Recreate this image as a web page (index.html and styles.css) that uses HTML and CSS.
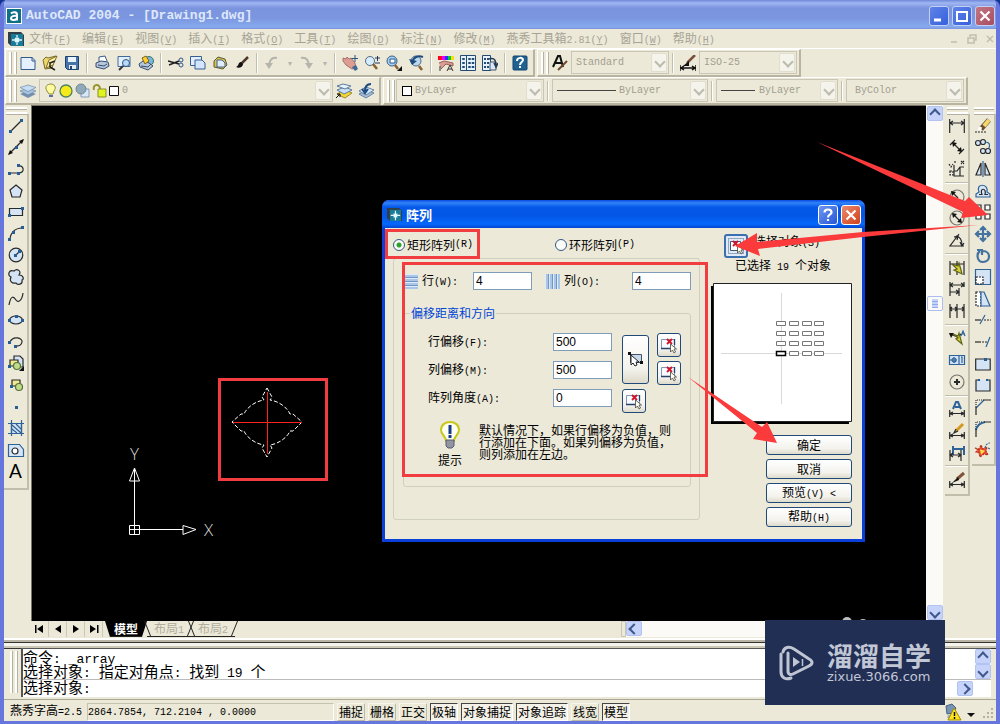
FILE: index.html
```html
<!DOCTYPE html>
<html lang="zh-CN">
<head>
<meta charset="utf-8">
<title>AutoCAD 2004 - [Drawing1.dwg]</title>
<link rel="stylesheet" href="styles.css">
</head>
<body>
<div class="window">
<header class="titlebar">
  <svg class="app-logo" viewBox="0 0 16 16"><rect width="16" height="16" fill="#fff"/><rect x="1" y="1" width="14" height="14" fill="#0f6f86"/><path d="M5 5.500c2-2 6-1.500 6 1v6M11 8c-3-.5-6 0-6 2.300s4 2.500 6 0" fill="none" stroke="#fff" stroke-width="2"/></svg>
  <h1>AutoCAD 2004 - [Drawing1.dwg]</h1>
  <div class="win-buttons">
    <button class="wb" aria-label="最小化"><svg viewBox="0 0 18 18"><path d="M4 13h7" stroke="#fff" stroke-width="3"/></svg></button>
    <button class="wb" aria-label="最大化"><svg viewBox="0 0 18 18"><path d="M4 5h10M4 4v10h10V4" fill="none" stroke="#fff" stroke-width="2"/></svg></button>
    <button class="wb wb-close" aria-label="关闭"><svg viewBox="0 0 18 18"><path d="M4.500 4.500l9 9m0-9l-9 9" stroke="#fff" stroke-width="2.200"/></svg></button>
  </div>
</header>
<nav class="menubar">
  <svg class="doc-logo" viewBox="0 0 16 16"><path d="M0 1h13l3 3v11H3l-3-3z" fill="#333d46"/><rect x="3" y="3" width="12" height="12" fill="#197b98"/><path d="M9 4v10M4 9h10M7 7l4 4m0-4l-4 4" stroke="#e2fbff" stroke-width="1.300"/></svg>
  <a href="#">文件<span class="k">(<u>F</u>)</span></a>
  <a href="#">编辑<span class="k">(<u>E</u>)</span></a>
  <a href="#">视图<span class="k">(<u>V</u>)</span></a>
  <a href="#">插入<span class="k">(<u>I</u>)</span></a>
  <a href="#">格式<span class="k">(<u>O</u>)</span></a>
  <a href="#">工具<span class="k">(<u>T</u>)</span></a>
  <a href="#">绘图<span class="k">(<u>D</u>)</span></a>
  <a href="#">标注<span class="k">(<u>N</u>)</span></a>
  <a href="#">修改<span class="k">(<u>M</u>)</span></a>
  <a href="#">燕秀工具箱<span class="k">2.81(<u>Y</u>)</span></a>
  <a href="#">窗口<span class="k">(<u>W</u>)</span></a>
  <a href="#">帮助<span class="k">(<u>H</u>)</span></a>
  <svg class="mdi" viewBox="0 0 46 12"><path d="M1 9h6M18 5h6v5h-6zM20 4V2h6v5h-2M37 3l6 6m0-6l-6 6" fill="none" stroke="#c2beaf" stroke-width="1.500"/></svg>
</nav>

<div class="bar-row">
  <div class="bar">
    <i class="grip"></i>
    <button class="tb" aria-label="新建"><svg viewBox="0 0 16 16"><path d="M1 2.500h11l3 3v9H1z" fill="#e4f0ff" stroke="#315a8a"/><path d="M12 2v4h3" stroke="#315a8a"/></svg></button>
    <button class="tb" aria-label="打开"><svg viewBox="0 0 16 16"><path d="M1 5l3-3 2 1 8-2-4 12-7 1z" fill="#ecd76c" stroke="#7c6b27"/><path d="M4 13L7 5l8-4-4 9z" fill="#fff3ae" stroke="#7c6b27"/><path d="M8 7v5l5 3M8 8l5-2" stroke="#222" stroke-width="1.500"/></svg></button>
    <button class="tb" aria-label="保存"><svg viewBox="0 0 16 16"><path d="M1.500 1.500h13v13h-11l-2-2z" fill="#4674aa" stroke="#1d426e"/><path d="M4 2h8v5H4z" fill="#e8f4ff"/><path d="M5 10h7v4H5z" fill="#e7eaf0"/><path d="M7 11v3" stroke="#23466f" stroke-width="2"/></svg></button>
    <i class="sep"></i>
    <button class="tb" aria-label="打印"><svg viewBox="0 0 16 16"><path d="M5 7V2l6-1 2 5" fill="#fff" stroke="#385d86"/><path d="M2 8l5-2 7 1 1 4-5 3-8-2z" fill="#b6c7dc" stroke="#344d72"/><path d="M4 10l6 1 3-2" stroke="#344d72"/></svg></button>
    <button class="tb" aria-label="打印预览"><svg viewBox="0 0 16 16"><path d="M2 1.500h12v10H2z" fill="#e1efff" stroke="#406b9b"/><circle cx="10" cy="8" r="3.500" fill="#b8d9f7" stroke="#30557d"/><path d="M7 11l-4 4" stroke="#334" stroke-width="2"/></svg></button>
    <button class="tb" aria-label="发布"><svg viewBox="0 0 16 16"><circle cx="11" cy="6" r="4.500" fill="#7bb5dd" stroke="#376"/><path d="M1 9l4-3 6 2 4 3-5 4-8-3z" fill="#b6c7dc" stroke="#394e6d"/><path d="M4 3l4-2 3 5-4 3z" fill="#ffcf2e" stroke="#7c5e22"/><path d="M3 11l7 1 3-3" stroke="#394e6d"/></svg></button>
    <i class="sep"></i>
    <button class="tb" aria-label="剪切"><svg viewBox="0 0 16 16"><path d="M0 6l11 3M1 10l10-4" stroke="#222" stroke-width="1.500"/><circle cx="13" cy="5" r="2" stroke="#315486"/><circle cx="13" cy="10" r="2" stroke="#315486"/></svg></button>
    <button class="tb" aria-label="复制"><svg viewBox="0 0 16 16"><path d="M.5 1.500h11v9H.5z" fill="#e2edff" stroke="#375f8d"/><path d="M5 5h7l3 3v6H5z" fill="#d2e7ff" stroke="#375f8d"/></svg></button>
    <button class="tb" aria-label="粘贴"><svg viewBox="0 0 16 16"><path d="M2 6l4-4 7 2 2 6-4 4-9-2z" fill="#d9c24e" stroke="#5c5936"/><path d="M5 5h5l3 3v4H5z" fill="#dfedff" stroke="#416189"/></svg></button>
    <button class="tb" aria-label="特性匹配"><svg viewBox="0 0 16 16"><path d="M14 2L7 9" stroke="#4c3b2c" stroke-width="2.500"/><path d="M7 7c-3 0-2 4-5 5 3 2 7 0 7-3z" fill="#111"/></svg></button>
    <i class="sep"></i>
    <button class="tb" aria-label="放弃"><svg viewBox="0 0 16 16"><path d="M13 3C7 2 5 6 5 12" stroke="#b5b4ad" stroke-width="2"/><path d="M1 8l4 6 4-6z" fill="#b5b4ad"/></svg></button>
    <i class="mini">▾</i>
    <button class="tb" aria-label="重做"><svg viewBox="0 0 16 16"><path d="M2 3c6-1 8 3 8 9" stroke="#b5b4ad" stroke-width="2"/><path d="M6 8l4 6 4-6z" fill="#b5b4ad"/></svg></button>
    <i class="mini">▾</i>
    <i class="sep"></i>
    <button class="tb" aria-label="平移"><svg viewBox="0 0 16 16"><path d="M1 3l3 1 1-2 2 2 2-1 4 5 1 5-4 1-6-4-3-4z" fill="#dc9d93" stroke="#a97069"/><path d="M10 12l4-2 2 4-3 2z" fill="#416994"/><path d="M13 0v7M9.500 3.500h6.500" stroke="#29557c"/></svg></button>
    <button class="tb" aria-label="实时缩放"><svg viewBox="0 0 16 16"><circle cx="6" cy="6" r="4.500" fill="#d6ecff" stroke="#546b82"/><path d="M9 9l4 5" stroke="#8a602f" stroke-width="2.500"/><path d="M11 3h5M13.500 1v5M11 8h5" stroke="#203b63"/></svg></button>
    <button class="tb" aria-label="窗口缩放"><svg viewBox="0 0 16 16"><circle cx="6" cy="6" r="5" fill="#a9d4fa" stroke="#425c78"/><path d="M4 4h5v4H4z" fill="#fff" stroke="#235992"/><path d="M9 10l3 4" stroke="#8a602f" stroke-width="2.500"/><path d="M16 11v5h-5z" fill="#111"/></svg></button>
    <button class="tb" aria-label="缩放上一个"><svg viewBox="0 0 16 16"><circle cx="8" cy="6" r="5" fill="#bad8ef" stroke="#4f6c89"/><path d="M11 11l3 4" stroke="#8a602f" stroke-width="2.500"/><path d="M15 2C9 0 5 3 4 7" stroke="#1f4c7c" stroke-width="2"/><path d="M1 4l3 6 5-4z" fill="#1f4c7c"/></svg></button>
    <i class="sep"></i>
    <button class="tb" aria-label="特性"><svg viewBox="0 0 16 16"><path d="M0 1h4v4H0z" fill="#f02"/><path d="M4 1h3v4H4z" fill="#e0f"/><path d="M7 1h3v4H7z" fill="#23f"/><path d="M10 1h3v4h-3z" fill="#0c4"/><path d="M13 1h3v4h-3z" fill="#fd0"/><path d="M1 8l5-2 9 2v3L8 9l-5 5" fill="#d89d94" stroke="#9b5d56"/><path d="M9 16l3-6 3 6M10 14h4M2 11v5" stroke="#333"/></svg></button>
    <button class="tb" aria-label="设计中心"><svg viewBox="0 0 16 16"><path d="M.5.500h15v15H.5z" fill="#e6f3ff" stroke="#244c73"/><path d="M6.500 1v15" stroke="#244c73"/><path d="M3.500 3v11M9.500 3v11M13 3v11" stroke="#244c73" stroke-width="2.500" stroke-dasharray="2 2"/></svg></button>
    <button class="tb" aria-label="工具选项板"><svg viewBox="0 0 16 16"><path d="M.5.500h8v15h-8z" fill="#e6f3ff" stroke="#244c73"/><path d="M3 3v11M6 3v11" stroke="#244c73" stroke-width="2" stroke-dasharray="2 2"/><path d="M8 7h6v8H8z" fill="#d9e8f9" stroke="#456"/><path d="M7 4c6-2 7 2 7 7m-2-3 2 4 2-4" stroke="#253a52" stroke-width="1.500"/></svg></button>
    <i class="sep"></i>
    <button class="tb" aria-label="帮助"><svg viewBox="0 0 16 16"><rect x="1" y="1" width="14" height="14" rx="1" fill="#206291" stroke="#10476f"/><path d="M5 6c0-4 6-4 6-1 0 2-3 2-3 5M8 11v2" stroke="#fff" stroke-width="2"/></svg></button>
  </div>
  <div class="bar">
    <i class="grip"></i>
    <span class="tb"><svg viewBox="0 0 16 16"><path d="M1 12L6 1h2l3 11M3 8h7" stroke="#111" stroke-width="2"/><path d="M15 6l-6 6-3 3" stroke="#70482f" stroke-width="2"/></svg></span>
    <label class="combo w-style"><select disabled aria-label="文字样式"><option>Standard</option></select><i class="chev"></i></label>
    <i class="sep"></i>
    <span class="tb"><svg viewBox="0 0 16 16"><path d="M0 10v6M16 10v6M1 13h14M4 11l-3 2 3 2M12 11l3 2-3 2" stroke="#111" stroke-width="1.500"/><path d="M15 0L7 8" stroke="#785039" stroke-width="2.500"/><path d="M9 6L3 11h6z" fill="#111"/></svg></span>
    <label class="combo w-style"><select disabled aria-label="标注样式"><option>ISO-25</option></select><i class="chev"></i></label>
  </div>
</div>

<div class="bar-row">
  <div class="bar">
    <i class="grip"></i>
    <button class="tb" aria-label="图层特性管理器"><svg viewBox="0 0 16 16"><path d="M0 11l8-3 8 3-8 4z" fill="#7890ad"/><path d="M0 8l8-3 8 3-8 4z" fill="#a9c4df" stroke="#597c9f" stroke-width=".6"/><path d="M0 4.500L8 2l8 2.500-8 4z" fill="#c7def2" stroke="#597c9f" stroke-width=".6"/></svg></button>
    <label class="combo w-layer"><select disabled aria-label="图层"><option>0</option></select>
      <svg class="layer-icons" viewBox="0 0 76 16"><path d="M3 8C0 3 4 1 7 1s6 3 3 7l-1 3H5z" fill="#fffb9e" stroke="#8c8b41"/><path d="M5 12h4v2H5z" fill="#626da0"/><circle cx="22" cy="8" r="6" fill="#f6ea1b" stroke="#4b8360" stroke-width="1.300"/><path d="M37 6h8v8h-8z" fill="#d6e8fa" stroke="#889bb4"/><circle cx="37" cy="6" r="5" fill="#8fa9b9" stroke="#748894"/><path d="M50 7c-2-6 6-7 6-1v4" fill="none" stroke="#9a9428" stroke-width="2"/><path d="M54 6h8v8h-8z" fill="#dff51e" stroke="#8c8b31"/><path d="M65.500 3.500h9v9h-9z" fill="#fff" stroke="#111"/></svg>
      <i class="chev"></i></label>
    <button class="tb" aria-label="图层置为当前"><svg viewBox="0 0 16 16"><path d="M1 11l8-4 7 3-7 5z" fill="#f2d737" stroke="#9d8728"/><path d="M1 7l8-3 7 3-8 4z" fill="#c9dff6" stroke="#5e7b9d"/><path d="M1 3l6-2 8 2-6 3z" fill="#e3f2ff" stroke="#5e7b9d"/><path d="M0 15l4-4M1 11h3v3" stroke="#111"/></svg></button>
    <button class="tb" aria-label="上一个图层"><svg viewBox="0 0 16 16"><path d="M1 11l8-4 7 3-8 5z" fill="#a8bed6" stroke="#6683a5"/><path d="M1 8l7-4 8 3-8 5z" fill="#d6e8fb" stroke="#6683a5"/><path d="M13 1C8 1 7 4 7 8M4 6l3 4 3-4" stroke="#1b4980" stroke-width="2"/></svg></button>
  </div>
  <div class="bar">
    <i class="grip"></i>
    <label class="combo w-color"><select disabled aria-label="颜色"><option>ByLayer</option></select><i class="swatch"></i><i class="chev"></i></label>
    <i class="sep"></i>
    <label class="combo w-type"><select disabled aria-label="线型"><option>ByLayer</option></select><i class="stroke-line"></i><i class="chev"></i></label>
    <i class="sep"></i>
    <label class="combo w-weight"><select disabled aria-label="线宽"><option>ByLayer</option></select><i class="stroke-line"></i><i class="chev"></i></label>
    <i class="sep"></i>
    <label class="combo w-plot"><select disabled aria-label="打印样式"><option>ByColor</option></select><i class="chev"></i></label>
  </div>
</div>

<main class="work">
  <div class="side side-draw">
    <i class="hgrip"></i>
    <div class="stack draw-stack">
      <button aria-label="直线"><svg viewBox="0 0 16 16"><path d="M2 14L14 2"/><path class="d" d="M1 12h3v3H1zM12 1h3v3h-3z"/></svg></button>
      <button aria-label="构造线"><svg viewBox="0 0 16 16"><path d="M1 15L15 1"/><path class="b" d="M0 16l2-5 3 3zM16 0l-2 5-3-3z"/><path class="d" d="M7 7h3v3H7z"/></svg></button>
      <button aria-label="多段线"><svg viewBox="0 0 16 16"><path d="M1 12h10c6 0 5-8 0-7"/><path class="d" d="M0 11h3v3H0zM9 11h3v3H9zM9 3h3v3H9z"/></svg></button>
      <button aria-label="正多边形"><svg viewBox="0 0 16 16"><path class="f" d="M8 2l6 5-2 7H4L2 7z"/></svg></button>
      <button aria-label="矩形"><svg viewBox="0 0 16 16"><path class="f" d="M1.500 4.500h13v7h-13z"/><path class="d" d="M0 10h3v3H0zM13 3h3v3h-3z"/></svg></button>
      <button aria-label="圆弧"><svg viewBox="0 0 16 16"><path d="M2 14C2 7 7 2 14 2"/><path class="d" d="M0 12h3v3H0zM4 5h3v3H4zM13 0h3v3h-3z"/></svg></button>
      <button aria-label="圆"><svg viewBox="0 0 16 16"><circle class="f" cx="8" cy="8" r="6.800"/><path d="M7 9l4-4"/><path class="d" d="M6 7h3v3H6zM10 3h3v3h-3z"/></svg></button>
      <button aria-label="修订云线"><svg viewBox="0 0 16 16"><path class="f" d="M3 8C-1 6 1 0 6 2c3-3 8 0 5 4 5 0 5 5 3 5 1 5-5 5-6 3-4 1-7-2-5-6z"/></svg></button>
      <button aria-label="样条曲线"><svg viewBox="0 0 16 16"><path d="M1 14C3 3 6 6 8 9s6 1 7-7"/></svg></button>
      <button aria-label="椭圆"><svg viewBox="0 0 16 16"><ellipse class="f" cx="8" cy="8" rx="6.500" ry="4"/><path class="d" d="M0 7h3v3H0zM13 7h3v3h-3zM7 3h3v3H7z"/></svg></button>
      <button aria-label="椭圆弧"><svg viewBox="0 0 16 16"><path d="M2 8c3-7 13-4 12 0-1 5-5 4-7 4"/><path class="d" d="M0 7h3v3H0zM6 11h3v3H6z"/></svg></button>
      <button aria-label="插入块"><svg viewBox="0 0 16 16"><path class="f" d="M6 1h6l3 3v8H6z"/><path class="y" d="M2 5h8v6H2z"/><circle class="g" cx="9" cy="11" r="3.500"/><path class="d" d="M0 10h3v3H0z"/><path class="b" d="M16 11v5h-5z"/></svg></button>
      <button aria-label="创建块"><svg viewBox="0 0 16 16"><path class="y" d="M4 3h8v6H4z"/><circle class="g" cx="11" cy="10" r="3.500"/><path class="d" d="M2 8h3v3H2z"/></svg></button>
      <button aria-label="点"><svg viewBox="0 0 16 16"><path class="d" d="M7 7h3v3H7z"/></svg></button>
      <button aria-label="图案填充"><svg viewBox="0 0 16 16"><path class="f" d="M3.500 3.500h10v10h-10z"/><path class="blue" d="M0 3.500h16M0 13.500h16M3.500 0v16M13.500 0v16M4 5l9 8M4 9l5 4M8 4l5 5"/></svg></button>
      <button aria-label="面域"><svg viewBox="0 0 16 16"><path class="f blue" d="M.5 2.500h11l4 5v7H.5z"/><circle class="w" cx="7" cy="9" r="3"/></svg></button>
      <button class="text-tool" aria-label="多行文字">A</button>
    </div>
  </div>

  <div class="center">
    <div class="view">
      <svg class="drawing" viewBox="1 1 400 515">
        <g fill="none" stroke="#fff">
          <path d="M103.500 420V364M99 424.500h53M98.500 420.500h10v9h-10zM103.500 419v11M103.500 363l-5 13h10zM165 424.500l-13-4v9z"/>
          <path stroke-dasharray="4 2" d="M236 283l5 9-2 3c8 1 17 7 20 14h3l9 8-9 9h-3c-3 7-12 13-20 14l2 3-5 9-5-9 2-3c-8-1-17-7-20-14h-3l-9-9 9-8h3c3-7 12-13 20-14l-2-3z"/>
        </g>
        <path d="M202 317.500h69M236.500 287v62" fill="none" stroke="#ff2020"/>
        <g class="axis"><text x="99" y="355">Y</text><text x="173" y="431">X</text></g>
      </svg>
    </div>
    <div class="tabs">
      <button class="nav" aria-label="第一个"><svg viewBox="0 0 18 16"><path d="M4 4h1.500v8H4zM12 4v8L6 8z"/></svg></button>
      <button class="nav" aria-label="上一个"><svg viewBox="0 0 18 16"><path d="M12 4v8L6 8z"/></svg></button>
      <button class="nav" aria-label="下一个"><svg viewBox="0 0 18 16"><path d="M6 4v8l6-4z"/></svg></button>
      <button class="nav" aria-label="最后一个"><svg viewBox="0 0 18 16"><path d="M5 4v8l6-4zM12 4h1.500v8H12z"/></svg></button>
      <button class="tab tab-on">模型</button>
      <button class="tab">布局<span class="k">1</span></button>
      <button class="tab">布局<span class="k">2</span></button>
      <div class="hscroll"><i class="split"></i><button class="sb left" aria-label="向左"></button></div>
    </div>
  </div>

  <div class="vscroll">
    <button class="sb up" aria-label="向上"></button>
    <i class="thumb"></i>
    <button class="sb down" aria-label="向下"></button>
  </div>

  <div class="side">
    <i class="hgrip"></i>
    <div class="stack dim-stack">
      <button aria-label="线性标注"><svg viewBox="0 0 16 16"><path d="M.7 1v14M15.300 1v14M1 5h14M4 3L1 5l3 2M12 3l3 2-3 2"/></svg></button>
      <button aria-label="对齐标注"><svg viewBox="0 0 16 16"><path d="M1 6l5-5M10 15l5-5M4 4l9 9"/><path class="b" d="M3 3l5 1-4 4zM13 13l-5-1 4-4z"/></svg></button>
      <button aria-label="坐标标注"><svg viewBox="0 0 16 16"><path d="M5 4v11h10M5 10h3l3-4h4M11 6v9" /><path stroke-dasharray="2 1" d="M0 3l2 3 2-3M1 10h3v4H1zM6 0v3M12 0l3 3m0-3-3 3"/></svg></button>
      <i class="hsep"></i>
      <button aria-label="半径标注"><svg viewBox="0 0 16 16"><circle class="gray" cx="8" cy="8" r="7"/><path d="M9 9L4 4"/><path class="b" d="M2 2l5 1-4 4z"/></svg></button>
      <button aria-label="直径标注"><svg viewBox="0 0 16 16"><circle class="gray" cx="8" cy="8" r="7"/><path d="M4 4l8 8"/><path class="b" d="M3 3l5 1-4 4zM13 13l-5-1 4-4z"/></svg></button>
      <button aria-label="角度标注"><svg viewBox="0 0 16 16"><path d="M15 14H1L10 2M7 4c5 1 6 5 6 9M5 5l4-1-1 4M11 10l2 4 2-3"/></svg></button>
      <i class="hsep"></i>
      <button aria-label="快速标注"><svg viewBox="0 0 16 16"><path d="M1 1v14M15 1v14M1 4h14M8 1v14"/><path class="bolt" d="M3 4l6 2 1-3 2 7 1 4-8-4 3-1z"/></svg></button>
      <button aria-label="基线标注"><svg viewBox="0 0 16 16"><path d="M1 1v14M10 7v8M15 1v5M1 4h14M1 11h9M4 2L1 4l3 2M12 2l3 2-3 2M7 9l3 2-3 2"/></svg></button>
      <button aria-label="连续标注"><svg viewBox="0 0 16 16"><path d="M1 1v14M8 1v14M15 1v14M1 6h14M3 4L1 6l2 2M6 4l2 2-2 2M13 4l2 2-2 2"/></svg></button>
      <i class="hsep"></i>
      <button aria-label="快速引线"><svg viewBox="0 0 16 16"><path d="M1 4l8 3 3-3"/><path class="b" d="M0 3h5l-3 5z"/><path class="bolt" d="M4 4l5 2 1-3 3 11-6-5 2-1z"/><path class="blue" d="M12 6l2-5 2 5M13 4h3"/></svg></button>
      <button aria-label="公差"><svg viewBox="0 0 16 16"><path class="f blue" d="M.5 3.500h15v9H.5z"/><path class="blue" d="M10 4v8M1 8h7M5 5v6M12 5h1v6"/><circle class="blue" cx="5" cy="8" r="2"/></svg></button>
      <button aria-label="圆心标记"><svg viewBox="0 0 16 16"><circle class="gray" cx="8" cy="8" r="7"/><path d="M8 5v6M5 8h6" stroke-width="2"/></svg></button>
      <i class="hsep"></i>
      <button aria-label="编辑标注"><svg viewBox="0 0 16 16"><path class="blue" d="M4 8l3-7h2l3 7M6 6h5" stroke-width="2"/><path d="M.7 9v7M15.300 9v7M1 12.500h14M4 11l-3 1.500L4 14M12 11l3 1.500-3 1.500"/></svg></button>
      <button aria-label="编辑标注文字"><svg viewBox="0 0 16 16"><path style="stroke:#d59821;stroke-width:3" d="M14 1L7 8"/><path d="M7 6l-2 4 4-2M.7 9v7M15.300 9v7M1 12.500h14M4 11l-3 1.500L4 14M12 11l3 1.500-3 1.500"/></svg></button>
      <button aria-label="标注更新"><svg viewBox="0 0 16 16"><path class="blue" d="M4 1v9M15 1v9M4 4h11" stroke-width="2"/><path d="M1 5v11M12 5v11M1 10h11M4 8l-3 2 3 2M9 8l3 2-3 2"/></svg></button>
      <i class="hsep"></i>
      <button aria-label="标注样式管理"><svg viewBox="0 0 16 16"><path d="M.7 9v7M15.300 9v7M1 12.500h14M4 11l-3 1.500L4 14M12 11l3 1.500-3 1.500"/><path d="M15 1L8 7" stroke="#81533d" stroke-width="3"/><path class="b" d="M9 5l-6 6 7-3z"/></svg></button>
    </div>
  </div>
  <div class="side side-modify">
    <i class="hgrip"></i>
    <div class="stack modify-stack">
      <button aria-label="删除"><svg viewBox="0 0 16 16"><path d="M0 14h12" stroke-dasharray="2 1"/><path d="M14 2L6 11" stroke="#6b4c2f" stroke-width="5"/><path d="M14 2L9 8" stroke="#f3d96b" stroke-width="4"/><path d="M6 9l-2 3" stroke="#fff" stroke-width="3"/></svg></button>
      <button aria-label="复制对象"><svg viewBox="0 0 16 16"><circle class="f" cx="3" cy="4" r="2.500"/><circle class="f" cx="8" cy="3" r="2.500"/><circle class="f" cx="8" cy="12" r="2.500"/><circle class="f" cx="13" cy="12" r="2.500"/><path class="blue" d="M10 3c5 0 5 3 4 6"/></svg></button>
      <button aria-label="镜像"><svg viewBox="0 0 16 16"><path class="f" d="M6 2v12H1z"/><path class="f" d="M10 2v12h5z"/><path class="blue" d="M8 0v16"/></svg></button>
      <button aria-label="偏移"><svg viewBox="0 0 16 16"><path class="f blue" d="M1 14v-3l3-2c-4-9 10-9 8 0l3 2v3z"/><path d="M4 11.500h3c-3-7 5-7 3 0h3"/></svg></button>
      <button aria-label="阵列"><svg viewBox="0 0 16 16"><path class="w" d="M1 1h5v5H1zM10 1h5v5h-5zM1 10h5v5H1zM10 10h5v5h-5z"/></svg></button>
      <button aria-label="移动"><svg viewBox="0 0 16 16"><path class="mid" d="M8 1v14M1 8h14M5 4l3-3 3 3M5 12l3 3 3-3M4 5L1 8l3 3M12 5l3 3-3 3"/></svg></button>
      <button aria-label="旋转"><svg viewBox="0 0 16 16"><path class="mid" d="M5 3C1 6 2 14 8 14c8 0 8-11 0-11M2 2h5v5"/></svg></button>
      <button aria-label="缩放"><svg viewBox="0 0 16 16"><path class="f blue" d="M.5.500h15v15H.5z"/><path class="w" stroke-dasharray="2 1" d="M1 8h7v7H1z"/></svg></button>
      <button aria-label="拉伸"><svg viewBox="0 0 16 16"><path class="w" d="M1 1h5v14H1z" stroke-dasharray="2 1"/><path class="f blue" d="M6 1h3l6 14H6z"/></svg></button>
      <button aria-label="修剪"><svg viewBox="0 0 16 16"><path d="M0 8h6"/><path stroke-dasharray="2 1" d="M9 8h7"/><path class="blue" d="M10 3L5 12"/></svg></button>
      <button aria-label="延伸"><svg viewBox="0 0 16 16"><path d="M0 8h6"/><path stroke-dasharray="2 1" d="M7 8h5"/><path class="blue" d="M15 3l-4 10"/></svg></button>
      <button aria-label="打断于点"><svg viewBox="0 0 16 16"><path class="f" d="M.7 3h14.500v11H.7z"/><path class="d" d="M9 2h3v3H9z"/></svg></button>
      <button aria-label="打断"><svg viewBox="0 0 16 16"><path class="f" stroke="none" d="M1 3h14v11H1z"/><path d="M4 3H1v11h14V3h-3"/><path class="d" d="M3 2h2v2H3zM11 2h2v2h-2z"/></svg></button>
      <button aria-label="倒角"><svg viewBox="0 0 16 16"><path stroke-dasharray="1 1" d="M1 8V1h7"/><path class="blue" d="M1 9l8-8"/><path d="M8 1h8M1 8v8"/></svg></button>
      <button aria-label="圆角"><svg viewBox="0 0 16 16"><path stroke-dasharray="1 1" d="M1 8V1h7"/><path class="blue" d="M1 9c1-5 4-7 9-8" stroke-width="2"/><path d="M9 1h7M1 8v8"/></svg></button>
      <button aria-label="分解"><svg viewBox="0 0 16 16"><path d="M0 6l4 1 2-4 2 4 4-2-1 4 2 4-4-1-4 3-1-4-3-1 2-2z" fill="#e6482c" stroke="#b83420" stroke-dasharray="2 1"/><path d="M5 8l4 1-3 3" fill="#ffd94c" stroke="#ffd94c"/><path d="M10 6c1-4 3-5 5-5M13 6l2 1" stroke="#456799" stroke-dasharray="2 1"/></svg></button>
    </div>
  </div>
</main>

<section class="command">
  <i class="grip cgrip"></i>
  <div class="console">
    <div class="history">
      <div class="log"><p>命令<span class="m">: _array</span></p><p>选择对象<span class="m">: </span>指定对角点<span class="m">: </span>找到<span class="m"> 19 </span>个</p></div>
      <div class="log-scroll"><button class="sb up" aria-label="上一行"></button><button class="sb down" aria-label="下一行"></button></div>
    </div>
    <div class="prompt"><label for="cmd">选择对象<span class="m">:</span></label><input id="cmd" type="text"><button class="sb right" aria-label="向右"></button></div>
  </div>
</section>

<footer class="status">
  <span class="height">燕秀字高<span class="k">=2.5</span></span>
  <output class="coords k">2864.7854, 712.2104 , 0.0000</output>
  <button>捕捉</button><button>栅格</button><button>正交</button><button class="on">极轴</button><button class="on">对象捕捉</button><button class="on">对象追踪</button><button>线宽</button><button class="on">模型</button>
  <svg class="tray" viewBox="0 0 52 18"><path d="M2 3l6-2 4 4-3 5-6 1z" fill="#7894b4" stroke="#49617f"/><path d="M4 12h6v3H3z" fill="#9cb2cb"/><path d="M10 5l7 12H4z" fill="#ffe51f" stroke="#9b8900"/><path d="M10.500 9v4M10.500 14v2" stroke="#111" stroke-width="1.500"/><path d="M23 10h8l-4 4z" fill="#111"/><path d="M48 5v12M44 9v8M40 13v4" stroke="#b5b09b" stroke-width="2" stroke-dasharray="2 2"/></svg>
</footer>

<section class="dialog" role="dialog" aria-labelledby="dlg-name">
  <header class="dlg-title">
    <svg viewBox="0 0 16 16"><path d="M0 1h13l3 3v11H3l-3-3z" fill="#333d46"/><rect x="3" y="3" width="12" height="12" fill="#197b98"/><path d="M9 4v10M4 9h10M7 7l4 4m0-4l-4 4" stroke="#e2fbff" stroke-width="1.300"/></svg>
    <h2 id="dlg-name">阵列</h2>
    <button class="db" aria-label="帮助"><svg viewBox="0 0 18 18"><path d="M5.500 6.500c0-4 7-4 7 0 0 2-3.500 2-3.500 5M9 13v2" fill="none" stroke="#fff" stroke-width="2.200"/></svg></button>
    <button class="db db-close" aria-label="关闭"><svg viewBox="0 0 18 18"><path d="M4.500 4.500l9 9m0-9l-9 9" stroke="#fff" stroke-width="2.200"/></svg></button>
  </header>
  <div class="dlg-body">
    <div class="dlg-left">
      <div class="kinds">
        <label><input type="radio" name="kind" checked>矩形阵列<span class="k">(R)</span></label>
        <label><input type="radio" name="kind">环形阵列<span class="k">(P)</span></label>
      </div>
      <div class="panel">
        <div class="counts">
          <i class="rows-ic"></i><label for="rows">行<span class="k">(W):</span></label><input id="rows" type="text" value="4">
          <i class="cols-ic"></i><label for="cols">列<span class="k">(O):</span></label><input id="cols" type="text" value="4">
        </div>
        <fieldset>
          <legend>偏移距离和方向</legend>
          <div class="offsets">
            <label for="ro">行偏移<span class="k">(F):</span></label><input id="ro" type="text" value="500">
            <button class="xp tall" aria-label="拾取两个偏移"><svg viewBox="0 0 18 18"><path d="M3.500 4.500h11v8h-11z" fill="#c9d9ea" stroke="#40546c"/><path d="M1 2h3v3H1zM13 11h3v3h-3z" fill="#111"/><path d="M4 5v10l2-2 2 3 2-1-1-3h3z" fill="#fff" stroke="#222"/></svg></button>
            <button class="xp pick" aria-label="拾取行偏移"><svg viewBox="0 0 18 18"><path d="M1.500 3.500h13v9h-13z" fill="#f7faff" stroke="#8298bb"/><path d="M1 12.500h9M14.500 3v6" stroke="#26406b" stroke-width="1.300"/><path d="M7 3l5 5m0-5L7 8" stroke="#d21529" stroke-width="1.800"/><path d="M10.500 8v8l2-2 1.500 3 1.500-1-1.500-3h2.500z" fill="#ffe" stroke="#444" stroke-width=".8"/></svg></button>
            <label for="co">列偏移<span class="k">(M):</span></label><input id="co" type="text" value="500">
            <button class="xp pick" aria-label="拾取列偏移"><svg viewBox="0 0 18 18"><path d="M1.500 3.500h13v9h-13z" fill="#f7faff" stroke="#8298bb"/><path d="M1 12.500h9M14.500 3v6" stroke="#26406b" stroke-width="1.300"/><path d="M7 3l5 5m0-5L7 8" stroke="#d21529" stroke-width="1.800"/><path d="M10.500 8v8l2-2 1.500 3 1.500-1-1.500-3h2.500z" fill="#ffe" stroke="#444" stroke-width=".8"/></svg></button>
            <label for="an">阵列角度<span class="k">(A):</span></label><input id="an" type="text" value="0">
            <button class="xp pick" aria-label="拾取阵列角度"><svg viewBox="0 0 18 18"><path d="M1.500 3.500h13v9h-13z" fill="#f7faff" stroke="#8298bb"/><path d="M1 12.500h9M14.500 3v6" stroke="#26406b" stroke-width="1.300"/><path d="M7 3l5 5m0-5L7 8" stroke="#d21529" stroke-width="1.800"/><path d="M10.500 8v8l2-2 1.500 3 1.500-1-1.500-3h2.500z" fill="#ffe" stroke="#444" stroke-width=".8"/></svg></button>
          </div>
          <div class="hint">
            <div class="bulb"><svg viewBox="0 0 20 28"><path d="M6 20c0-5-5-6-5-11C1 4 5 1 10 1s9 3 9 8-5 6-5 11z" fill="#fffff0" stroke="#c8c71e" stroke-width="2"/><path d="M6 19h8v6l-2 2H8l-2-2z" fill="#9294a0" stroke="#555b70"/><path d="M10 4v9M10 14v3" stroke="#16398a" stroke-width="3"/></svg><span>提示</span></div>
            <p>默认情况下，如果行偏移为负值，则<br>行添加在下面。如果列偏移为负值，<br>则列添加在左边。</p>
          </div>
        </fieldset>
      </div>
    </div>
    <div class="dlg-right">
      <div class="choose"><button class="xp pick focus" aria-label="选择对象"><svg viewBox="0 0 18 18"><path d="M1.500 1.500h15v15h-15z" fill="none" stroke="#4d617f" stroke-dasharray="1 1"/><path d="M3.500 4.500h10v9h-10z" fill="#fff" stroke="#3f5578"/><path d="M6 4l5 5m0-5L6 9" stroke="#d21529" stroke-width="1.800"/><path d="M10.500 8v8l2-2 1.500 3 1.500-1-1.500-3h2.500z" fill="#ffe" stroke="#444" stroke-width=".8"/></svg></button><span>选择对象<span class="k">(S)</span></span></div>
      <p class="chosen">已选择<span class="k"> 19 </span>个对象</p>
      <svg class="preview" viewBox="0 0 141 141"><path d="M0 3h138v138H0z" fill="#000"/><path d="M2.500.500h138v138h-138z" fill="#fff" stroke="#222"/><path d="M70.500 10v111M10 70.500h121" stroke="#d9d9d9"/><g fill="#fff" stroke="#777"><path d="M65.500 38.500h9v4h-9zM78.500 38.500h9v4h-9zM91.500 38.500h9v4h-9zM103.500 38.500h9v4h-9zM65.500 48.500h9v4h-9zM78.500 48.500h9v4h-9zM91.500 48.500h9v4h-9zM103.500 48.500h9v4h-9zM65.500 58.500h9v4h-9zM78.500 58.500h9v4h-9zM91.500 58.500h9v4h-9zM103.500 58.500h9v4h-9zM78.500 68.500h9v4h-9zM91.500 68.500h9v4h-9zM103.500 68.500h9v4h-9z"/><path d="M65.500 68.500h9v4h-9z" stroke="#000" stroke-width="1.500"/></g></svg>
      <div class="actions">
        <button class="xp">确定</button>
        <button class="xp">取消</button>
        <button class="xp">预览<span class="k">(V) &lt;</span></button>
        <button class="xp">帮助<span class="k">(H)</span></button>
      </div>
    </div>
  </div>
</section>

<svg class="marks" viewBox="0 0 1000 724">
  <g fill="none" stroke="#f13c40" stroke-width="3"><path d="M219.500 379.500h107v100h-107zM386.500 230.500h92v27h-92zM403.500 263.500h303v212h-303z"/></g>
  <g fill="#fb3a3c"><path d="M817 142l148 59 4-4 19 18-27 3 2-6z"/><path d="M979 225l-116 7-106 10 0-9-22 13 25 10-2-7 105-12z"/><path d="M688 377l74 50 5-5 10 21-24-4 4-6z"/></g>
  <g fill="#b9bdc4"><circle cx="847" cy="622" r="5"/><circle cx="863" cy="623" r="4"/></g>
</svg>
<aside class="watermark">
  <svg viewBox="0 0 36 36"><g fill="none" stroke="#bfc5d2" stroke-linecap="round"><path d="M9 8v18c0 4 3 4 5 3l16-8c4-2 4-5 0-7L15 4C10 1 5 2 4 7" stroke-width="3"/><path d="M2 9v18c0 6 5 8 10 6" stroke-width="3"/></g><path d="M14 12v10l7-5z" fill="#bfc5d2"/><path d="M23.500 14v7" stroke="#bfc5d2" stroke-width="1.500"/></svg>
  <div><strong>溜溜自学</strong><span>zixue.3066.com</span></div>
</aside>
</div>
</body>
</html>
```
FILE: styles.css
```css
* { box-sizing: border-box; }
body {
  margin: 0;
  font: 12px/14px "Noto Sans CJK SC", sans-serif;
  color: #000;
  background: #10358c;
}
h1, h2, p { margin: 0; }
i { font-style: normal; }
button {
  font: inherit;
  color: inherit;
  padding: 0;
  border: 0;
  background: none;
}
.k { font-family: "Liberation Mono", monospace; font-size: 10px; white-space: pre; }
.m { font-family: "Liberation Mono", monospace; font-size: 13px; white-space: pre; }

.window {
  position: relative;
  display: flex;
  flex-direction: column;
  min-height: 100vh;
  border: solid #6676dc;
  border-width: 0 4px 4px;
  border-radius: 7px 7px 0 0;
  background: #ece9d8;
  overflow: hidden;
}

/* title bar */
.titlebar {
  display: flex;
  align-items: center;
  gap: 4px;
  height: 29px;
  margin: 0 -4px;
  padding: 3px 5px 0 6px;
  background: linear-gradient(#6f87d8, #9fb7f2 3px, #7b94de 8px, #7b96df 18px, #86aaee 27px, #7b93dd);
}
.app-logo { width: 16px; height: 16px; }
.titlebar h1 {
  font: bold 13px/16px "Liberation Mono", monospace;
  color: #dfe8fb;
  white-space: nowrap;
}
.win-buttons { display: flex; gap: 3px; margin-left: auto; }
.wb {
  width: 20px;
  height: 20px;
  border: 1px solid #c3cff4;
  border-radius: 3px;
  background: linear-gradient(135deg, #5f83e6, #3560dd);
}
.wb-close { background: linear-gradient(135deg, #c27682, #a84d60); }
.wb svg, .db svg { display: block; width: 100%; height: 100%; }

/* menus */
.menubar {
  display: flex;
  align-items: center;
  gap: 11px;
  height: 20px;
  padding-left: 4px;
  border-bottom: 1px solid #fff;
}
.menubar a { padding-top: 2px; color: #a7a396; text-decoration: none; white-space: nowrap; }
.doc-logo { width: 16px; height: 16px; margin-right: -6px; }
.mdi { width: 46px; height: 12px; margin-left: auto; }

/* toolbars */
.bar-row { display: flex; gap: 2px; height: 28px; padding-left: 1px; }
.bar {
  display: flex;
  align-items: center;
  padding: 0 2px 0 3px;
  border: solid;
  border-width: 1px 2px 2px 1px;
  border-color: #fff #b8b4a0 #b8b4a0 #fff;
}
.grip {
  width: 7px;
  height: 22px;
  border: solid #fff;
  border-width: 0 2px;
  box-shadow: 1px 0 #b5b19e, inset 1px 0 #b5b19e;
}
.tb { display: grid; place-items: center; width: 22px; height: 24px; }
.tb svg { width: 16px; height: 16px; fill: none; }
.grip + .tb { margin-left: 1px; }
.grip + .combo { margin-left: 2px; }
.sep { width: 8px; height: 20px; background: linear-gradient(90deg, transparent 3px, #c2beac 3px 4px, #fff 4px 5px, transparent 5px); }
.mini { width: 13px; color: #b5b4ad; font-size: 8px; text-align: center; }
.combo {
  position: relative;
  display: block;
  height: 23px;
  border: 1px solid #c9c6b5;
}
.combo select {
  width: 100%;
  height: 100%;
  padding: 0 20px 0 4px;
  border: 0;
  appearance: none;
  background: transparent;
  color: #a29e91;
  opacity: 1;
  font: 10px/20px "Liberation Mono", monospace;
}
.chev {
  position: absolute;
  top: 1px;
  right: 1px;
  width: 16px;
  height: 19px;
  border: 1px solid #e1decd;
  border-radius: 2px;
  background: #f4f3ec;
}
.chev::after {
  content: "";
  position: absolute;
  top: 4px;
  left: 4px;
  width: 6px;
  height: 6px;
  border: solid #bdbbad;
  border-width: 0 2px 2px 0;
  transform: rotate(45deg);
}
.w-style { width: 98px; }
.w-layer { width: 294px; }
.w-layer select { padding-left: 82px; }
.layer-icons { position: absolute; left: 4px; top: 3px; width: 76px; height: 16px; }
.w-color { width: 148px; }
.w-color select { padding-left: 18px; }
.swatch { position: absolute; left: 5px; top: 6px; width: 10px; height: 10px; border: 1px solid #000; background: #fff; }
.w-type { width: 156px; }
.w-type select { padding-left: 66px; }
.stroke-line { position: absolute; left: 4px; top: 10px; width: 59px; height: 1px; background: #444; }
.w-weight { width: 122px; }
.w-weight select { padding-left: 42px; }
.w-weight .stroke-line { width: 34px; }
.w-plot { width: 118px; }
.w-plot select { padding-left: 8px; }

/* working area */
.work { display: flex; flex: 1; }
.side { width: 25px; margin-left: 2px; }
.side-draw { width: 27px; margin-left: 0; padding-right: 2px; }
.side-modify { width: 24px; }
.hgrip {
  display: block;
  height: 7px;
  margin: 2px 2px 0;
  border: solid #fff;
  border-width: 2px 0;
  box-shadow: 0 1px #b5b19e, inset 0 1px #b5b19e;
}
.stack {
  display: flex;
  flex-direction: column;
  border: solid #c2beac;
  border-width: 0 2px 2px 0;
}
.draw-stack { height: 376px; padding: 1px 0 6px; }
.dim-stack { height: 382px; padding: 1px 0 3px; }
.modify-stack { height: 352px; padding: 1px 0 3px; }
.stack button { display: grid; place-items: center; flex: 1; min-height: 0; }
.stack svg {
  width: 16px;
  height: 16px;
  overflow: visible;
  fill: none;
  stroke: #27292b;
  stroke-width: 1.2;
}
.stack .d { fill: #245e96; stroke: none; }
.stack .f { fill: #d5e4f5; }
.stack .y { fill: #efea90; }
.stack .g { fill: #c0dc87; stroke: #55703b; }
.stack .w { fill: #fff; }
.stack .b { fill: #111; stroke: none; }
.stack .blue { stroke: #2d6399; }
.stack .mid { stroke: #45739f; stroke-width: 2.2; }
.stack .gray { stroke: #77776f; }
.stack .bolt { fill: #d8d233; stroke: #5e641b; }
.stack .text-tool { font: 19px/20px Lato, sans-serif; }
.hsep { height: 6px; background: linear-gradient(transparent 2px, #c2beac 2px 3px, #fff 3px 4px, transparent 4px); }

.center { display: flex; flex: 1; flex-direction: column; min-width: 0; }
.view { flex: 1; min-height: 516px; border-top: 1px solid #77756a; border-left: 1px solid #77756a; background: #000; }
.drawing { display: block; width: 400px; height: 515px; }
.axis text { fill: #ddd; font: 17px "Open Sans", sans-serif; font-weight: 300; }
.tabs { display: flex; height: 16px; }
.nav { width: 18px; border-right: 1px solid #ccc8b7; }
.nav svg { display: block; width: 18px; height: 16px; }
.tab {
  position: relative;
  width: 44px;
  color: #b1ad9e;
  border-bottom: 1px solid #222;
  line-height: 13px;
}
.tab::before, .tab::after {
  content: "";
  position: absolute;
  top: 0;
  height: 15px;
  border-right: 1px solid #222;
}
.tab::before { left: 0; transform: skewX(22deg); }
.tab::after { right: 0; transform: skewX(-22deg); }
.tab-on {
  width: 42px;
  margin-left: 2px;
  color: #fff;
  font-weight: bold;
  background: #000;
  clip-path: polygon(0 0, 100% 0, 88% 100%, 12% 100%);
}
.hscroll { display: flex; width: 305px; margin-left: auto; background: #fbfaf7; }
.split { width: 5px; border: 1px solid #c9c6b5; background: #ece9d8; }

/* scroll bars */
.vscroll {
  display: flex;
  flex-direction: column;
  justify-content: space-between;
  width: 17px;
  margin-bottom: 16px;
  padding: 1px 0 1px 1px;
  background: #fbfaf7;
}
.thumb {
  height: 15px;
  margin-bottom: 120px;
  padding: 2px 4px;
  border: 1px solid #a9bdf0;
  border-radius: 2px;
  background: repeating-linear-gradient(#c6d4fc 0 2px, #90a9e8 2px 3px) content-box #c6d4fc;
}
.sb {
  display: grid;
  place-items: center;
  flex: none;
  width: 16px;
  height: 15px;
  border: 1px solid #b3c3f0;
  border-radius: 2px;
  background: #c6d4fc;
}
.sb::after {
  content: "";
  width: 6px;
  height: 6px;
  border: solid #40598c;
  border-width: 2px 0 0 2px;
  transform: rotate(45deg);
}
.sb.left::after { transform: rotate(-45deg); }
.sb.right::after { transform: rotate(135deg); }
.sb.down::after { transform: rotate(225deg); }

/* command window */
.command {
  display: flex;
  gap: 4px;
  padding: 0 5px 2px 6px;
  border-top: 1px solid transparent;
  background: linear-gradient(#fff 0 2px, #b9b5a4 2px 4px, #333 4px 5px, #f5f3ea 5px 8px, #ccc8b7 8px 10px, #333 10px 11px, #ece9d8 11px);
}
.cgrip { height: 42px; margin-top: 13px; }
.console { flex: 1; margin-top: 10px; border: solid #555; border-width: 1px 0 0 2px; background: #fff; }
.history { display: flex; height: 31px; border-bottom: 1px solid #bbb; }
.log { flex: 1; font-size: 15px; line-height: 14px; padding-top: 1px; }
.log p { height: 14px; white-space: nowrap; }
.log-scroll { display: flex; flex-direction: column; justify-content: space-between; }
.prompt { display: flex; align-items: center; height: 17px; padding-right: 18px; font-size: 15px; line-height: 16px; }
.prompt input { flex: 1; min-width: 0; height: 16px; border: 0; outline: 0; background: none; }

/* status bar */
.status {
  display: flex;
  align-items: center;
  gap: 3px;
  height: 22px;
  padding: 2px 0 0 6px;
  border-top: 1px solid #aaa796;
  white-space: nowrap;
}
.height { width: 74px; }
.coords { width: 247px; height: 18px; line-height: 18px; border: 1px solid #c6c2b0; border-right-color: #fff; border-bottom-color: #fff; }
.status button { height: 18px; padding: 0 1px; border: 1px solid #f8f6ec; border-right-color: #bdb9a8; border-bottom-color: #bdb9a8; line-height: 15px; }
.status .on { border-color: #444 #fff #fff #444; background: #f4f2e8; }
.tray { width: 52px; height: 18px; margin-left: auto; }

/* array dialog */
.dialog {
  position: absolute;
  left: 378px;
  top: 200px;
  width: 483px;
  border: solid #0a3fd8;
  border-width: 0 3px 3px;
  border-radius: 7px 7px 0 0;
  background: #ece9d8;
}
.dlg-title {
  display: flex;
  align-items: center;
  gap: 3px;
  height: 28px;
  margin: 0 -3px;
  padding: 1px 4px 0 5px;
  border-radius: 7px 7px 0 0;
  background: linear-gradient(#0a4ae0, #3183fa 3px, #0559e8 7px, #0457e6 16px, #0668fd 24px, #0346ce);
}
.dlg-title > svg { width: 15px; height: 15px; }
.dlg-title h2 { flex: 1; margin-left: 1px; color: #fff; font-size: 13px; line-height: 16px; }
.db {
  width: 20px;
  height: 20px;
  border: 1px solid #fff;
  border-radius: 3px;
  background: linear-gradient(135deg, #6e97f0, #2656d6);
}
.db-close { background: linear-gradient(135deg, #eb8a6b, #d1401b); }
.dlg-body { display: flex; gap: 11px; padding: 4px 10px 12px 8px; }
.dlg-left { width: 307px; }
.dlg-right { flex: 1; }
.kinds { display: grid; grid-template-columns: 162px 1fr; align-items: center; height: 26px; }
.kinds label { display: flex; align-items: center; }
.kinds input {
  appearance: none;
  width: 12px;
  height: 12px;
  margin: 0 2px 0 0;
  border: 1px solid #305a86;
  border-radius: 50%;
  background: #fbfbf8;
}
.kinds input:checked { background: radial-gradient(circle, #2ba02b 0 2px, #fbfbf8 3px); }
.panel { padding: 12px 8px 32px 9px; border: 1px solid #d0d0bf; border-radius: 3px; }
.counts {
  display: grid;
  grid-template-columns: 17px 51px 72px 19px 68px 59px;
  align-items: center;
  height: 20px;
  padding-left: 2px;
}
.rows-ic { width: 13px; height: 15px; background: repeating-linear-gradient(#dceafa 0 1px, #a9c6e8 1px 3px, #7396c2 3px 4px); }
.cols-ic { width: 15px; height: 15px; background: repeating-linear-gradient(90deg, #dceafa 0 1px, #a9c6e8 1px 3px, #7396c2 3px 4px); }
.panel input {
  width: 59px;
  height: 18px;
  padding: 0 2px;
  border: 1px solid #7f9db9;
  background: #fff;
  font: 12px/16px "Liberation Sans", sans-serif;
}
fieldset { min-width: 0; margin: 14px 0 0; padding: 10px 6px 19px; border: 1px solid #d0d0bf; border-radius: 3px; }
legend { height: 16px; padding: 0 1px; color: #0046d5; line-height: 15px; }
.offsets {
  display: grid;
  grid-template-columns: 125px 69px 35px 24px;
  grid-auto-rows: 28px;
  align-items: center;
  margin-left: 18px;
}
.offsets label, .offsets input { margin-bottom: 6px; }
.xp {
  border: 1px solid #1f4a7a;
  border-radius: 3px;
  background: linear-gradient(#fff, #f3f2ec 70%, #dedacb);
}
.tall { display: grid; place-items: center; grid-row: span 2; width: 27px; height: 49px; }
.tall svg { width: 18px; height: 18px; }
.pick { width: 24px; height: 24px; }
.pick svg { display: block; width: 18px; height: 18px; margin: 2px; }
.focus { border: 2px solid #3c6fae; background: #dfe9f7; }
.focus svg { margin: 1px; }
.hint { display: flex; gap: 17px; margin: 6px 0 0 28px; }
.bulb { display: flex; flex-direction: column; align-items: center; gap: 4px; width: 24px; }
.bulb svg { width: 20px; height: 28px; }
.bulb span { white-space: nowrap; }
.hint p { padding-top: 3px; line-height: 12px; white-space: nowrap; }
.choose { display: flex; gap: 6px; margin: 2px 0 0 13px; }
.chosen { margin: 0 0 8px 24px; }
.preview { display: block; width: 141px; height: 141px; }
.actions { display: grid; gap: 4px; margin: 11px 0 0 55px; }
.actions .xp { height: 20px; line-height: 16px; }

/* annotations and watermark */
.marks { position: absolute; left: -4px; top: 0; width: 1000px; height: 724px; pointer-events: none; }
.watermark {
  position: absolute;
  left: 761px;
  top: 620px;
  display: flex;
  align-items: center;
  gap: 12px;
  width: 180px;
  height: 85px;
  padding-left: 14px;
  background: #222f55;
  color: #c1c7d5;
}
.watermark svg { width: 36px; height: 36px; overflow: visible; }
.watermark strong { display: block; font-size: 26px; font-weight: 700; line-height: 28px; }
.watermark span { font: 13px/14px "DejaVu Sans", sans-serif; }
```
